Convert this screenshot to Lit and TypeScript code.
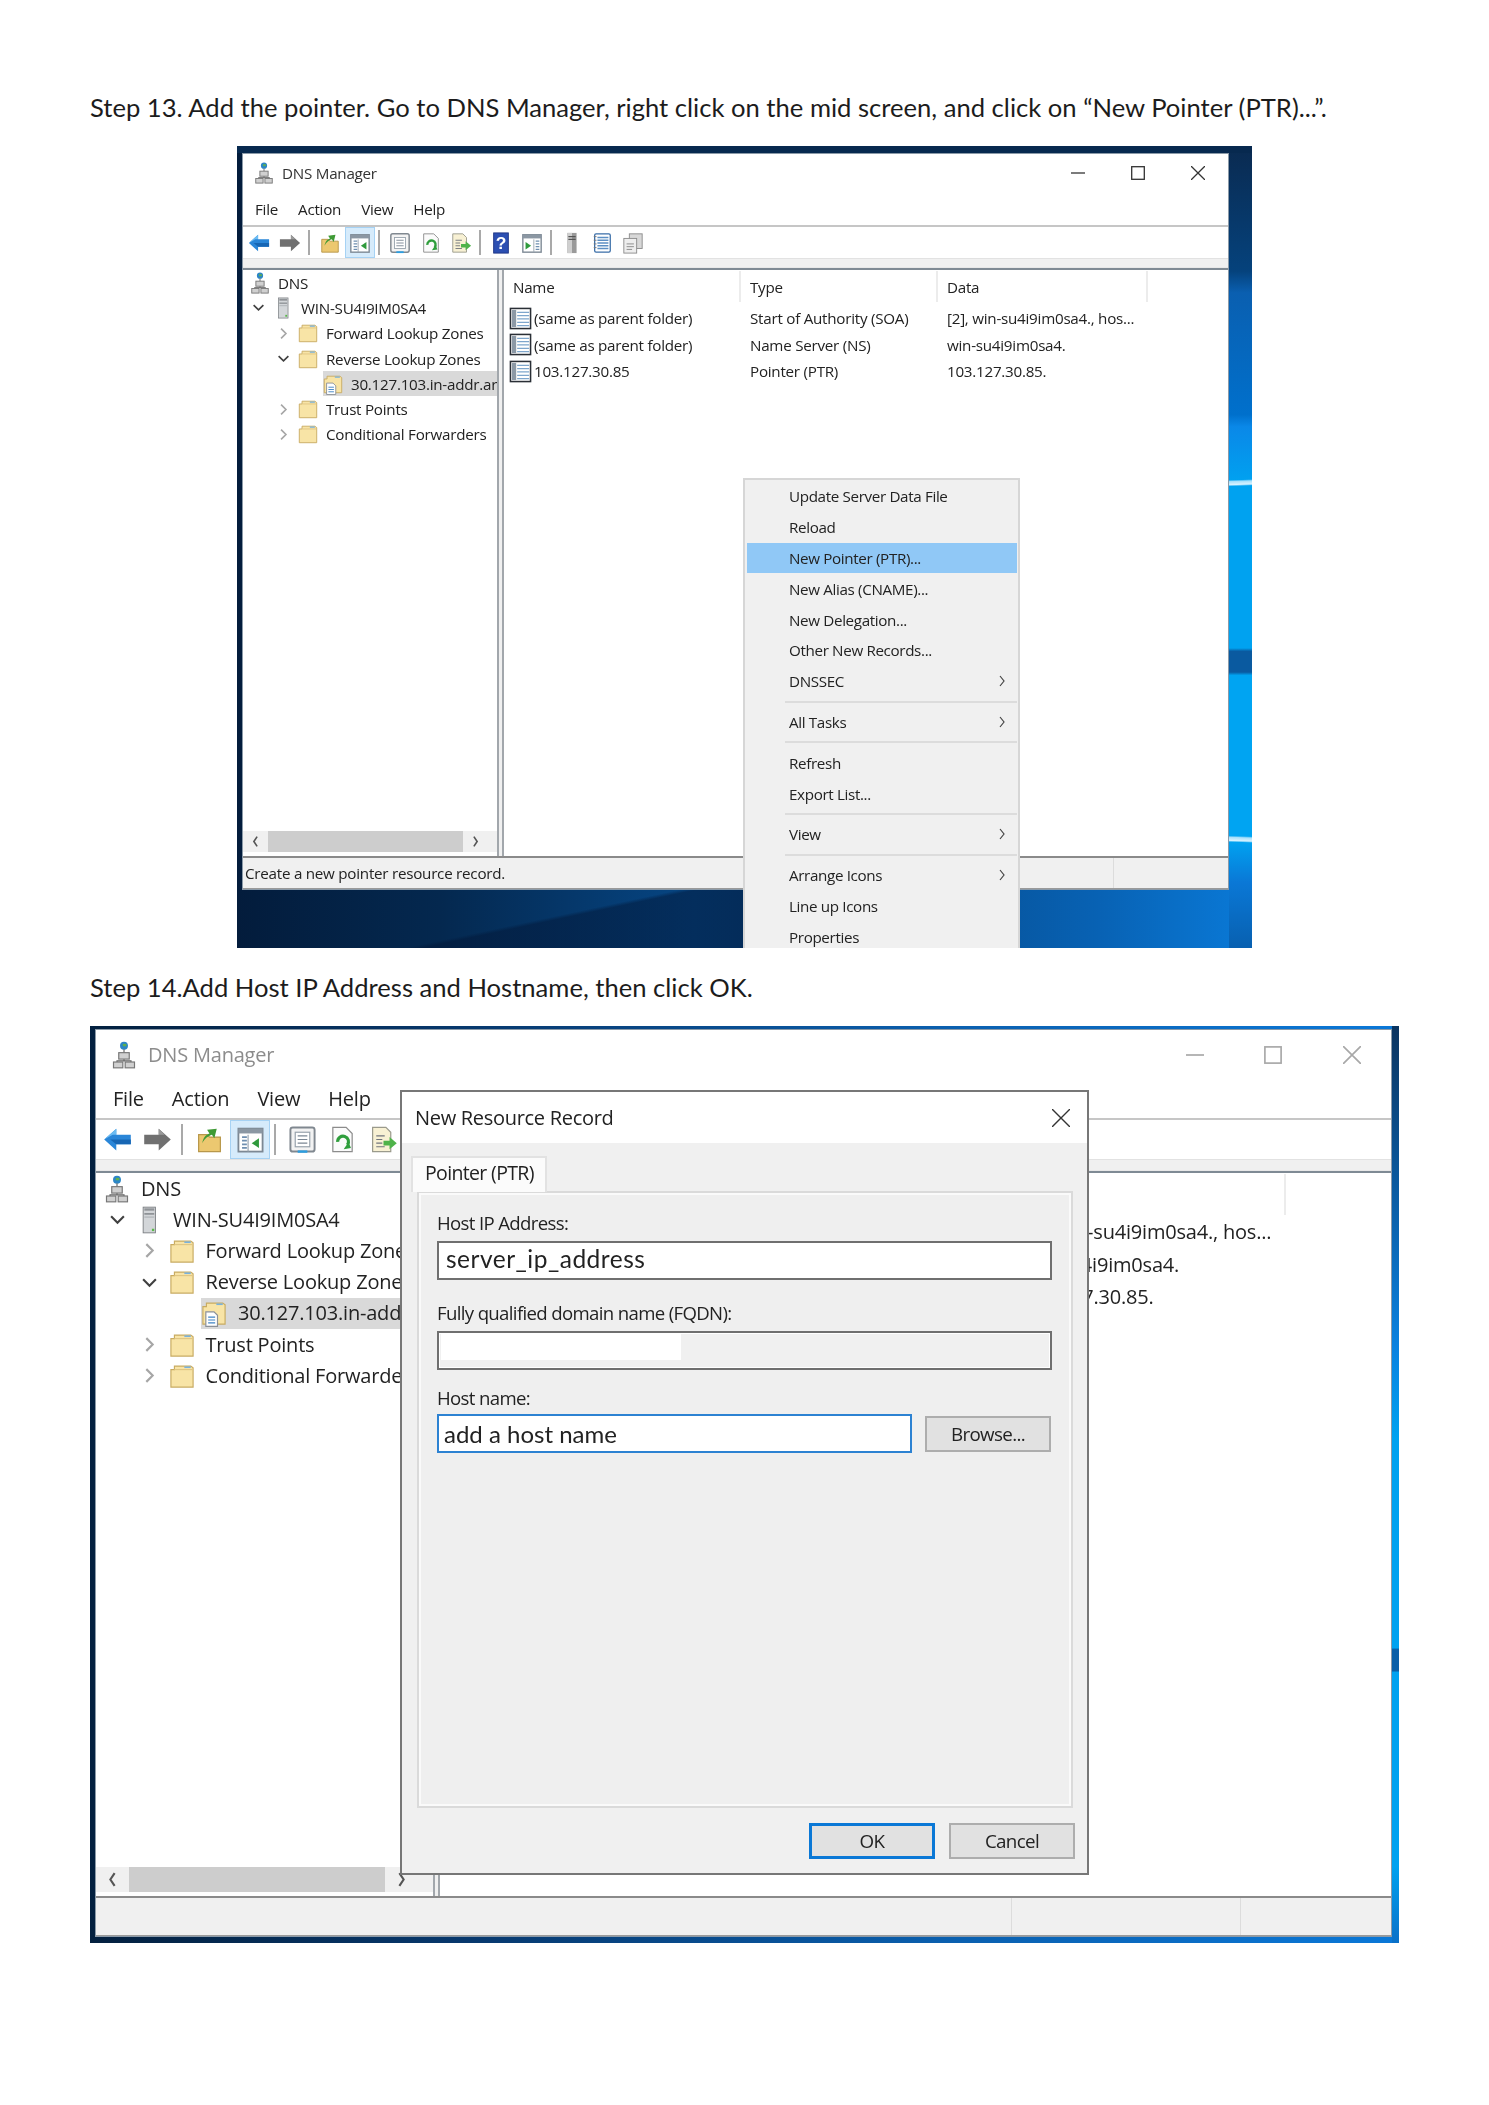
import { css, html, svg, LitElement } from 'lit';
import { customElement, property } from 'lit/decorators.js';

const icons: Record<string, unknown> = {
  back: svg`<path d="M1 12 11 3v5h12v8H11v5z" fill="#2a86d8"/><path d="M1 12 11 3v5H8z" fill="#6cbcf2"/><path d="M11 16h12v-4H6z" fill="#1766b4"/>`,
  fwd: svg`<path d="M23 12 13 3v5H1v8h12v5z" fill="#707070"/><path d="M1 8h12V3l5 5z" fill="#9a9a9a"/>`,
  up: svg`<path d="M3 22V8h7l2 2h9v12z" fill="#ecc870" stroke="#b8974a"/><path d="M6 15c1-5 3-7 6-8l-2-3 8-1-2 8-2-3c-3 1-6 3-8 7z" fill="#3f9a35"/>`,
  panelL: svg`<rect x="2" y="3" width="20" height="19" fill="#fff" stroke="#7c8894" stroke-width="1.5"/><rect x="2" y="3" width="20" height="4" fill="#8b97a3"/><path d="M5 10h4M5 13h4M5 16h4M5 19h4" stroke="#6f8fb0" stroke-width="1.5"/><path d="M10 8v14" stroke="#9aa5b0"/><path d="M13 15l6-4v8z" fill="#2f9a3c"/>`,
  panelR: svg`<rect x="2" y="3" width="20" height="19" fill="#fff" stroke="#7c8894" stroke-width="1.5"/><rect x="2" y="3" width="20" height="4" fill="#8b97a3"/><path d="M16 10h4M16 13h4M16 16h4M16 19h4" stroke="#6f8fb0" stroke-width="1.5"/><path d="M14 8v14" stroke="#9aa5b0"/><path d="M5 11l6 4-6 4z" fill="#2f9a3c"/>`,
  prop: svg`<rect x="2" y="2" width="20" height="20" rx="2" fill="#f3f3f3" stroke="#808890" stroke-width="1.6"/><rect x="6" y="6" width="12" height="12" fill="#fff" stroke="#9aa4ae"/><path d="M8 9h8M8 12h8M8 15h8" stroke="#7b8794"/><path d="M8 22h8" stroke="#2c9ee0" stroke-width="2"/>`,
  refresh: svg`<path d="M4 2h11l5 5v15H4z" fill="#fbfbfb" stroke="#8c8c8c"/><path d="M8 14a4.5 4.5 0 1 1 8 2.6" fill="none" stroke="#2f9e3c" stroke-width="2.6"/><path d="M13 20l6-1-2-5z" fill="#2f9e3c"/>`,
  exportList: svg`<path d="M3 2h11l4 4v16H3z" fill="#f8f1d4" stroke="#9a9a8c"/><path d="M6 9h7M6 12h5M6 15h5M6 18h7" stroke="#70747c"/><path d="M12 13h5v-3l6 5-6 5v-3h-5z" fill="#4fb34a"/>`,
  help: svg`<rect x="4" y="1" width="16" height="22" fill="#2c4fb2" stroke="#1c3384"/><text x="12" y="19" text-anchor="middle" font-family="Liberation Sans" font-size="19" font-weight="700" fill="#fff">?</text>`,
  serverT: svg`<rect x="7" y="1" width="10" height="22" fill="#9a9a9a"/><rect x="7" y="1" width="5" height="22" fill="#cfcfcf"/><path d="M8 5h8M8 8h8" stroke="#555" stroke-width="1.4"/>`,
  list: svg`<rect x="4" y="2" width="17" height="20" rx="1.5" fill="#fff" stroke="#3a6ea8" stroke-width="1.4"/><path d="M7 6h12M7 9h12M7 12h12M7 15h12M7 18h12" stroke="#5c8fc4" stroke-width="1.5"/><path d="M3 5h3M3 9h3M3 13h3M3 17h3" stroke="#777"/>`,
  copy: svg`<rect x="8" y="2" width="14" height="16" fill="#d8d8d8" stroke="#8b8b8b"/><rect x="2" y="7" width="14" height="16" fill="#eee" stroke="#8b8b8b"/><path d="M5 13h8M5 16h8M5 19h6" stroke="#888"/>`,
  dns: svg`<circle cx="12" cy="4" r="3.4" fill="#2c86c6"/><path d="M11 2.5h3v2h-3z" fill="#5fb04c"/><path d="M12 7v3M12 15v2M6 18v-1h12v1" stroke="#666" fill="none"/><rect x="7.5" y="10" width="9" height="5.5" fill="#d0d0d0" stroke="#777"/><rect x="3" y="18" width="8" height="5" fill="#d0d0d0" stroke="#777"/><rect x="13" y="18" width="8" height="5" fill="#d0d0d0" stroke="#777"/>`,
  server: svg`<rect x="7" y="1" width="10.5" height="22" fill="#d3d6d9" stroke="#7d8185" stroke-width=".8"/><rect x="8" y="2" width="8.5" height="2" fill="#8f9397"/><rect x="8" y="6" width="8.5" height="1.5" fill="#8f9397"/><rect x="8" y="9" width="8.5" height="1" fill="#aeb2b6"/><rect x="14.5" y="19.5" width="2" height="2" fill="#58b948"/>`,
  folder: svg`<path d="M2.500 21.500V6.500h3V3.500h14l2 1.500v16.500z" fill="#f8e4a6" stroke="#c8ab62"/><path d="M5.500 6.500H21" stroke="#e0c683"/><path d="M14 4.500h5.500" stroke="#79b2de" stroke-width="1.400"/>`,
  zone: svg`<path d="M2.500 21.500V6.500h3V3.500h14l2 1.500v16.500z" fill="#f8e4a6" stroke="#c8ab62"/><path d="M14 4.500h5.500" stroke="#79b2de" stroke-width="1.400"/><path d="M5 11h7l3 3v9.500H5z" fill="#fff" stroke="#8a9098"/><path d="M7 15.500h6M7 18h6M7 20.500h6" stroke="#3f83c4"/>`,
  record: svg`<rect x="1.500" y="1.500" width="21" height="21" fill="#fff" stroke="#2a2f36" stroke-width="1.600"/><rect x="3" y="3" width="4.500" height="18" fill="#8c99a6"/><path d="M8.500 5.500H21M8.500 9H21M8.500 12.500H21M8.500 16H21M8.500 19.500H21" stroke="#7ea6cc" stroke-width="1.300"/>`,
};

const icon = (name: string, cls = 'ic') =>
  html`<svg class=${cls} viewBox="0 0 24 24">${icons[name]}</svg>`;

const chevDown = html`<svg class="chev" viewBox="0 0 16 16"><path d="M2 5l6 6 6-6" fill="none" stroke="#404040" stroke-width="2"/></svg>`;
const chevRight = html`<svg class="chev" viewBox="0 0 16 16"><path d="M5 2l6 6-6 6" fill="none" stroke="#a6a6a6" stroke-width="2"/></svg>`;

const toolbar = ['back', 'fwd', '|', 'up', 'panelL', '|', 'prop', 'refresh', 'exportList', '|', 'help', 'panelR', '|', 'serverT', 'list', 'copy'];

const tree = [
  { name: 'DNS', icon: 'dns', level: 'root' },
  { name: 'WIN-SU4I9IM0SA4', icon: 'server', level: 'l0', chev: chevDown },
  { name: 'Forward Lookup Zones', icon: 'folder', level: 'l1', chev: chevRight },
  { name: 'Reverse Lookup Zones', icon: 'folder', level: 'l1', chev: chevDown },
  { name: '30.127.103.in-addr.arpa', icon: 'zone', level: 'l2', sel: true },
  { name: 'Trust Points', icon: 'folder', level: 'l1', chev: chevRight },
  { name: 'Conditional Forwarders', icon: 'folder', level: 'l1', chev: chevRight },
];

const records = [
  ['(same as parent folder)', 'Start of Authority (SOA)', '[2], win-su4i9im0sa4., hos...'],
  ['(same as parent folder)', 'Name Server (NS)', 'win-su4i9im0sa4.'],
  ['103.127.30.85', 'Pointer (PTR)', '103.127.30.85.'],
];

@customElement('dns-window')
export class DnsWindow extends LitElement {
  @property({ type: Boolean, reflect: true }) big = false;

  static styles = css`
    :host {
      --fs: 15.2px;
      --ls: -0.25px;
      --title-h: 38px;
      --menu-h: 33px;
      --tool-h: 31px;
      --band-h: 10px;
      --row-h: 25.3px;
      --list-row: 26.500px;
      --head-h: 31px;
      --tb: 30px;
      --tbi: 22px;
      --sep-l: 2.500px;
      --sep-r: 4.500px;
      --left-w: 256px;
      --indent: 25px;
      --chev-w: 21px;
      --chev-gap: 4px;
      --chev: 13px;
      --slot: 20px;
      --slot-gap: 8px;
      --tree-icon: 22px;
      --base: 5px;
      --root: 7px;
      --c1: 237px;
      --c2: 197px;
      --c3: 210px;
      --data-pad: 9px;
      --sb-h: 21px;
      --sb-a: 25px;
      --sb-t: 195px;
      --st-a: 178px;
      --st-b: 115px;
      --st-h: 31px;
      --ctl: 60px;
      --ctl-i: 14px;
      --title-pad: 11px;
      --menu-pad: 12px;
      --menu-gap: 20px;
      --title-c: #333;
      --ctl-c: #333;
      display: flex;
      flex-direction: column;
      flex: 1;
      min-height: 0;
      background: #fff;
      border: 1px solid #8b9aa8;
      box-sizing: border-box;
      font-family: "Open Sans", "Liberation Sans", sans-serif;
      font-size: var(--fs);
      letter-spacing: var(--ls);
      color: #222;
    }
    :host([big]) {
      --fs: 20px;
      --ls: -0.2px;
      --title-h: 50px;
      --menu-h: 38px;
      --tool-h: 39px;
      --band-h: 12px;
      --row-h: 31.200px;
      --list-row: 32.500px;
      --head-h: 41px;
      --tb: 40px;
      --tbi: 29px;
      --sep-l: 3px;
      --sep-r: 6px;
      --left-w: 339px;
      --indent: 32.500px;
      --chev-w: 30px;
      --chev-gap: 4px;
      --chev: 17px;
      --slot: 26px;
      --slot-gap: 11px;
      --tree-icon: 28px;
      --base: 6px;
      --root: 8px;
      --c1: 311px;
      --c2: 259px;
      --c3: 276px;
      --data-pad: 11px;
      --sb-h: 25px;
      --sb-a: 33px;
      --sb-t: 256px;
      --st-a: 229px;
      --st-b: 151px;
      --st-h: 38px;
      --ctl: 78.500px;
      --ctl-i: 18px;
      --title-pad: 15px;
      --menu-pad: 17px;
      --menu-gap: 28px;
      --title-c: #8c8c8c;
      --ctl-c: #a8a8a8;
    }
    .ic { width: var(--tbi); height: var(--tbi); flex: none; }
    .titlebar { display: flex; align-items: center; height: var(--title-h); padding-left: var(--title-pad); }
    .titlebar .slot { margin-right: var(--slot-gap); }
    .titlebar .name { flex: 1; color: var(--title-c); }
    .slot { width: var(--slot); display: flex; justify-content: center; flex: none; }
    .slot .tree-ic { width: var(--tree-icon); height: var(--tree-icon); flex: none; }
    .ctl { width: var(--ctl); display: flex; justify-content: center; }
    .ctl svg { width: var(--ctl-i); height: var(--ctl-i); fill: none; stroke: var(--ctl-c); stroke-width: 1.300; }
    .menubar {
      display: flex;
      align-items: center;
      gap: var(--menu-gap);
      height: var(--menu-h);
      padding-left: var(--menu-pad);
      border-bottom: 2px solid #c6c6c6;
    }
    .toolbar { display: flex; align-items: center; gap: 0.5px; height: var(--tool-h); padding-left: 1px; }
    .tool { width: var(--tb); height: var(--tool-h); display: flex; align-items: center; justify-content: center; flex: none; box-sizing: border-box; }
    .tool.on { background: #d6ebfb; border: 1px solid #a6d2f4; }
    .sep { width: 2px; height: 80%; background: #a9a9a9; margin: 0 var(--sep-r) 0 var(--sep-l); flex: none; }
    .band { height: var(--band-h); background: #f0f0f0; border-top: 1px solid #e2e2e2; box-sizing: border-box; border-bottom: 1px solid #e8e8e8; }
    .panes {
      flex: 1;
      min-height: 0;
      display: flex;
      gap: 3px;
      background: #f0f0f0;
      border-top: 2px solid #7f8a94;
      border-bottom: 2px solid #8a8a8a;
    }
    .left {
      width: var(--left-w);
      flex: none;
      box-sizing: border-box;
      display: flex;
      flex-direction: column;
      background: #fff;
      border-right: 2px solid #a2a7ac;
    }
    .tree { flex: 1; min-height: 0; overflow: hidden; }
    .row { display: flex; align-items: stretch; height: var(--row-h); white-space: nowrap; }
    .row.root { padding-left: var(--root); }
    .row.l0 { padding-left: var(--base); }
    .row.l1 { padding-left: calc(var(--base) + var(--indent)); }
    .row.l2 { padding-left: calc(var(--base) + var(--indent) * 2); }
    .chev-slot { width: var(--chev-w); display: flex; align-items: center; justify-content: center; flex: none; margin-right: var(--chev-gap); }
    .chev { width: var(--chev); height: var(--chev); }
    .node { display: flex; align-items: center; flex: 1; min-width: 0; overflow: hidden; }
    .node .slot { margin-right: var(--slot-gap); }
    .row.sel .node { background: #d9d9d9; }
    .hscroll { display: flex; align-items: stretch; height: var(--sb-h); background: #f0f0f0; margin-bottom: 4px; }
    .sb-arrow { width: var(--sb-a); display: flex; align-items: center; justify-content: center; flex: none; }
    .sb-arrow svg { width: calc(var(--chev) - 2px); height: var(--chev); fill: none; stroke: #555; stroke-width: 2; }
    .thumb { width: var(--sb-t); background: #cdcdcd; flex: none; }
    .right { flex: 1; min-width: 0; background: #fff; border-left: 2px solid #a2a7ac; padding-top: 1px; white-space: nowrap; overflow: hidden; }
    .cols { display: grid; grid-template-columns: var(--c1) var(--c2) var(--c3); }
    .head { height: var(--head-h); margin-bottom: 1px; }
    .head div { display: flex; align-items: center; padding-left: 9px; border-right: 2px solid #ececec; }
    .rec { height: var(--list-row); align-items: center; }
    .rec div { padding-left: 9px; }
    .rec div:first-child { display: flex; align-items: center; gap: 2px; padding-left: 5px; }
    .rec div:last-child { padding-left: var(--data-pad); }
    .rec .ic { width: calc(var(--tbi) + 1px); height: calc(var(--tbi) + 1px); }
    .status {
      height: var(--st-h);
      flex: none;
      display: grid;
      grid-template-columns: 1fr var(--st-a) var(--st-b);
      background: #f0f0f0;
      border-bottom: 1px solid #9a9a9a;
      box-sizing: border-box;
    }
    .status div { display: flex; align-items: center; padding-left: 2px; white-space: nowrap; }
    .status div + div { border-left: 1px solid #dcdcdc; }
  `;

  render() {
    return html`
      <div class="titlebar">
        <span class="slot">${icon('dns', 'tree-ic')}</span>
        <span class="name">DNS Manager</span>
        <span class="ctl"><svg viewBox="0 0 14 14"><path d="M0 7h14"/></svg></span>
        <span class="ctl"><svg viewBox="0 0 14 14"><rect x=".7" y=".7" width="12.600" height="12.600"/></svg></span>
        <span class="ctl"><svg viewBox="0 0 14 14"><path d="M0 0l14 14M14 0 0 14"/></svg></span>
      </div>
      <div class="menubar">
        ${['File', 'Action', 'View', 'Help'].map((m) => html`<span>${m}</span>`)}
      </div>
      <div class="toolbar">
        ${toolbar.map((t) =>
          t === '|'
            ? html`<span class="sep"></span>`
            : html`<span class="tool ${t === 'panelL' ? 'on' : ''}">${icon(t)}</span>`,
        )}
      </div>
      <div class="band"></div>
      <div class="panes">
        <div class="left">
          <div class="tree">
            ${tree.map(
              (n) => html`
                <div class="row ${n.level} ${n.sel ? 'sel' : ''}">
                  ${n.level === 'root' ? '' : html`<span class="chev-slot">${n.chev ?? ''}</span>`}
                  <span class="node">
                    <span class="slot">${icon(n.icon, 'tree-ic')}</span>
                    ${n.name}
                  </span>
                </div>
              `,
            )}
          </div>
          <div class="hscroll">
            <span class="sb-arrow"><svg viewBox="0 0 10 16"><path d="M7 2 3 8l4 6"/></svg></span>
            <span class="thumb"></span>
            <span class="sb-arrow"><svg viewBox="0 0 10 16"><path d="M3 2l4 6-4 6"/></svg></span>
          </div>
        </div>
        <div class="right">
          <div class="cols head"><div>Name</div><div>Type</div><div>Data</div></div>
          ${records.map(
            (r) => html`
              <div class="cols rec">
                <div>${icon('record')}<span>${r[0]}</span></div>
                <div>${r[1]}</div>
                <div>${r[2]}</div>
              </div>
            `,
          )}
        </div>
      </div>
      <div class="status">
        <div><slot name="status"></slot></div>
        <div></div>
        <div></div>
      </div>
    `;
  }
}

const menuGroups = [
  [['Update Server Data File'], ['Reload'], ['New Pointer (PTR)...', 'hi'], ['New Alias (CNAME)...'], ['New Delegation...'], ['Other New Records...'], ['DNSSEC', 'sub']],
  [['All Tasks', 'sub']],
  [['Refresh'], ['Export List...']],
  [['View', 'sub']],
  [['Arrange Icons', 'sub'], ['Line up Icons'], ['Properties']],
];

@customElement('ctx-menu')
export class CtxMenu extends LitElement {
  static styles = css`
    :host {
      position: absolute;
      left: 506px;
      top: 332px;
      width: 277px;
      box-sizing: border-box;
      background: #f0f0f0;
      border: 2px solid #d6d6d6;
      border-bottom: none;
      padding: 1px 1px 0 2px;
      font-family: "Open Sans", "Liberation Sans", sans-serif;
      font-size: 15.200px;
      letter-spacing: -0.350px;
      color: #222;
    }
    .item { display: flex; align-items: center; justify-content: space-between; height: 30.800px; padding: 0 12px 0 42px; white-space: nowrap; }
    .item.hi { background: #90c8f6; }
    .item svg { width: 6px; height: 12px; fill: none; stroke: #444; stroke-width: 1.200; }
    .rule { height: 2px; background: #dcdcdc; margin: 4px 0 4px 38px; }
  `;

  render() {
    return menuGroups.map(
      (g, i) => html`
        ${i ? html`<div class="rule"></div>` : ''}
        ${g.map(
          ([label, kind]) => html`
            <div class="item ${kind === 'hi' ? 'hi' : ''}">
              <span>${label}</span>
              ${kind === 'sub' ? html`<svg viewBox="0 0 6 12"><path d="M1 1l4 5-4 5"/></svg>` : ''}
            </div>
          `,
        )}
      `,
    );
  }
}

@customElement('record-dialog')
export class RecordDialog extends LitElement {
  static styles = css`
    :host {
      position: absolute;
      left: 310px;
      top: 64px;
      width: 689px;
      height: 785px;
      box-sizing: border-box;
      display: flex;
      flex-direction: column;
      border: 2px solid #777;
      background: #f0f0f0;
      font-family: "Open Sans", "Liberation Sans", sans-serif;
      font-size: 18.600px;
      letter-spacing: -0.650px;
      color: #222;
    }
    .bar { height: 51px; flex: none; display: flex; align-items: center; justify-content: space-between; background: #fff; padding: 0 17px 0 13px; font-size: 20px; letter-spacing: -0.300px; }
    .bar svg { width: 18px; height: 18px; fill: none; stroke: #333; stroke-width: 1.400; }
    .body { flex: 1; min-height: 0; display: flex; flex-direction: column; padding: 13px 12px 14px 9px; }
    .tab {
      width: 136px;
      height: 36px;
      box-sizing: border-box;
      display: flex;
      align-items: center;
      padding: 0 0 4px 12px;
      font-size: 19.500px;
      background: #fbfbfb;
      border: 2px solid #e2e2e2;
      border-bottom: none;
      position: relative;
      z-index: 1;
      margin-bottom: -1px;
    }
    .panel {
      flex: 1;
      min-height: 0;
      margin: 0 2px 0 6px;
      padding: 18px 19px 0 18px;
      border: 2px solid #dadada;
      box-shadow: inset 0 0 0 2px #fafafa;
      background: #efefef;
      display: flex;
      flex-direction: column;
    }
    label { display: block; height: 24px; line-height: 24px; }
    .input {
      display: flex;
      align-items: center;
      height: 39px;
      box-sizing: border-box;
      margin-top: 6px;
      padding: 0 0 3px 7px;
      background: #fff;
      border: 2px solid #6f6f6f;
      font-family: Lato, "Noto Sans", sans-serif;
      font-size: 24.500px;
      letter-spacing: 0.500px;
    }
    .input.ro { background: #f0f0f0; padding: 0 0 8px 2px; align-items: flex-start; box-shadow: inset 0 0 0 1px #fff; }
    .input.ro span { display: block; width: 240px; height: 26px; background: #fff; margin-top: 1px; }
    .field + .field { margin-top: 21px; }
    .field.host { margin-top: 16px; }
    .host-row { display: flex; gap: 13px; margin-top: 4px; align-items: center; }
    .host-row .input { margin: 0; width: 475px; border-color: #2c82d2; padding: 0 0 0 5px; letter-spacing: 0; font-size: 24px; }
    .btn {
      height: 36px;
      box-sizing: border-box;
      display: flex;
      align-items: center;
      justify-content: center;
      background: #e1e1e1;
      border: 2px solid #adadad;
      font-size: 18.800px;
    }
    .browse { width: 126px; }
    .actions { display: flex; justify-content: flex-end; gap: 14px; margin-top: 15px; }
    .actions .btn { width: 126px; }
    .actions .ok { border: 3px solid #0a78d6; }
  `;

  render() {
    return html`
      <div class="bar">
        <span>New Resource Record</span>
        <svg viewBox="0 0 18 18"><path d="M0 0l18 18M18 0 0 18"/></svg>
      </div>
      <div class="body">
        <div class="tab">Pointer (PTR)</div>
        <div class="panel">
          <div class="field">
            <label>Host IP Address:</label>
            <div class="input">server_ip_address</div>
          </div>
          <div class="field">
            <label>Fully qualified domain name (FQDN):</label>
            <div class="input ro"><span></span></div>
          </div>
          <div class="field host">
            <label>Host name:</label>
            <div class="host-row">
              <div class="input">add a host name</div>
              <div class="btn browse">Browse...</div>
            </div>
          </div>
        </div>
        <div class="actions">
          <div class="btn ok">OK</div>
          <div class="btn">Cancel</div>
        </div>
      </div>
    `;
  }
}

@customElement('app-root')
export class AppRoot extends LitElement {
  static styles = css`
    :host {
      display: flex;
      flex-direction: column;
      gap: 24px;
      width: 1489px;
      height: 2105px;
      box-sizing: border-box;
      padding: 92px 90px 0;
      background: #fff;
      font-family: Lato, "Noto Sans", sans-serif;
      font-size: 25.600px;
      line-height: 30px;
      color: #1c1c1c;
    }
    p { margin: 0; white-space: nowrap; }
    .shot {
      position: relative;
      display: flex;
      flex-direction: column;
      box-sizing: border-box;
      align-self: center;
      overflow: hidden;
      filter: blur(0.35px);
    }
    .one {
      width: 1015px;
      height: 802px;
      padding: 7px 23px 58px 5px;
      background:
        linear-gradient(#07294f, #07294f) left top / 100% 7px no-repeat,
        linear-gradient(178deg, transparent 41.600%, #a8e0fb 41.800%, #d8f2ff 42.200%, transparent 42.400%) right top / 23px 100% no-repeat,
        linear-gradient(182deg, transparent 86%, #a8e0fb 86.200%, #d8f2ff 86.600%, transparent 86.800%) right top / 23px 100% no-repeat,
        linear-gradient(180deg, #0a2a50 0, #05427c 15.600%, #0a5fb0 18.300%, #0070cc 33.500%, #0a88e8 35%, #00a2f0 42%, #00a2f0 62.600%, #0a5aa0 63%, #0a5aa0 65.600%, #00a4f2 66%, #00a4f2 86.500%, #0a78d6 91.800%, #0860b0 100%) right top / 23px 100% no-repeat,
        linear-gradient(168deg, transparent 50%, rgba(2, 22, 54, 0.5) 52%) left bottom / 60% 58px no-repeat,
        linear-gradient(90deg, #031c3c 0, #04284f 20%, #064684 45%, #06407a 55%, #0862b4 85%, #0a7ad8 100%);
    }
    .two {
      width: 1309px;
      height: 917px;
      padding: 3px 7px 6px 5px;
      background:
        linear-gradient(180deg, #0a3460 0, #0a5fa8 19.600%, #0a82e0 35%, #00a2f0 45%, #00a2f0 67.800%, #0a5fa8 68%, #0a5fa8 70.300%, #00a2f0 70.500%, #00a2f0 91.600%, #0a70c8 100%) right top / 7px 100% no-repeat,
        linear-gradient(90deg, #03203f 0, #07396f 30%, #0a5fae 65%, #0a78d8 100%);
    }
    .status-text { white-space: nowrap; }
  `;

  render() {
    return html`
      <p>Step 13. Add the pointer. Go to DNS Manager, right click on the mid screen, and click on “New Pointer (PTR)...”.</p>
      <div class="shot one">
        <dns-window><span slot="status" class="status-text">Create a new pointer resource record.</span></dns-window>
        <ctx-menu></ctx-menu>
      </div>
      <p>Step 14.Add Host IP Address and Hostname, then click OK.</p>
      <div class="shot two">
        <dns-window big></dns-window>
        <record-dialog></record-dialog>
      </div>
    `;
  }
}
